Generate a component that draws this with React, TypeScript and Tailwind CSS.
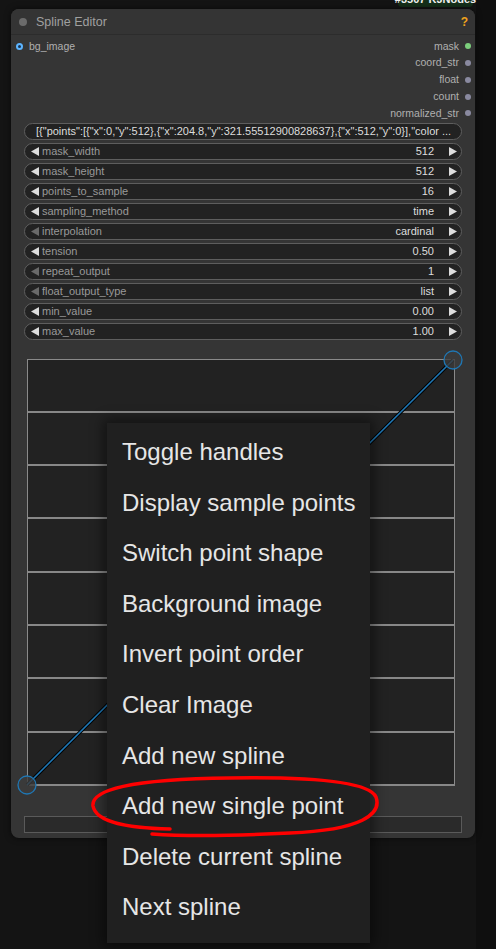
import React from "react";

type Widget = {
  label: string;
  value: string;
  dimLeft?: boolean;
};

const widgets: Widget[] = [
  { label: "mask_width", value: "512" },
  { label: "mask_height", value: "512" },
  { label: "points_to_sample", value: "16" },
  { label: "sampling_method", value: "time" },
  { label: "interpolation", value: "cardinal", dimLeft: true },
  { label: "tension", value: "0.50" },
  { label: "repeat_output", value: "1", dimLeft: true },
  { label: "float_output_type", value: "list", dimLeft: true },
  { label: "min_value", value: "0.00" },
  { label: "max_value", value: "1.00" },
];

const outputs = [
  { name: "mask", color: "bg-[#7ccf7c]" },
  { name: "coord_str", color: "bg-[#8a8aa0]" },
  { name: "float", color: "bg-[#8a8aa0]" },
  { name: "count", color: "bg-[#8a8aa0]" },
  { name: "normalized_str", color: "bg-[#8a8aa0]" },
];

const menuItems = [
  "Toggle handles",
  "Display sample points",
  "Switch point shape",
  "Background image",
  "Invert point order",
  "Clear Image",
  "Add new spline",
  "Add new single point",
  "Delete current spline",
  "Next spline",
];

const font = { fontFamily: '"Liberation Sans", Arial, sans-serif' };

function LeftArrow({ dim }: { dim?: boolean }) {
  return (
    <svg width="8" height="9" viewBox="0 0 8 9" className="shrink-0">
      <polygon points="8,0 8,9 0,4.5" fill={dim ? "#6a6a6a" : "#dddddd"} />
    </svg>
  );
}

function RightArrow() {
  return (
    <svg width="8" height="9" viewBox="0 0 8 9" className="shrink-0">
      <polygon points="0,0 0,9 8,4.5" fill="#dddddd" />
    </svg>
  );
}

function SplineCanvas() {
  const w = 428;
  const h = 426;
  const rows = [53, 106, 159, 213, 266, 319, 373];
  return (
    <div className="relative ml-[16px] mt-[19px] w-[428px] h-[427px]">
      <svg width={w} height={h + 1} className="absolute left-0 top-0 overflow-visible">
        <rect x="0.5" y="0.5" width={w - 1} height={h} fill="#222222" stroke="#8a8a8a" strokeWidth="1" />
        {rows.map((y) => (
          <line key={y} x1="0" x2={w} y1={y} y2={y} stroke="#888888" strokeWidth="2.2" />
        ))}
        <line x1="0" x2={w} y1={h} y2={h} stroke="#888888" strokeWidth="2.2" />
        <line x1="0" y1={h} x2={w - 2} y2="1" stroke="#000000" strokeWidth="3.5" />
        <line x1="0" y1={h} x2={w - 2} y2="1" stroke="#1f77b4" strokeWidth="1.6" />
        <circle cx="0" cy={h} r="9" fill="rgba(60,60,60,0.8)" stroke="#1f77b4" strokeWidth="1.3" />
        <circle cx={w - 2} cy="1" r="9" fill="rgba(60,60,60,0.8)" stroke="#1f77b4" strokeWidth="1.3" />
      </svg>
    </div>
  );
}

function Node() {
  return (
    <div
      className="absolute left-[11px] top-[9px] w-[464px] h-[829px] rounded-[8px] bg-[#353535] shadow-[0_0_6px_rgba(0,0,0,0.6)]"
      style={font}
    >
      {/* title bar */}
      <div className="h-[26px] flex items-center pt-[1px] px-[8px] border-b border-[#2c2c2c] rounded-t-[8px] bg-[#343434]">
        <div className="w-[8px] h-[8px] rounded-full bg-[#6b6b6b]" />
        <span className="ml-[9px] text-[12.5px] text-[#a0a0a0]">Spline Editor</span>
        <span className="ml-auto mr-[-1px] text-[12px] font-bold text-[#f0a31c]">?</span>
      </div>

      {/* slots */}
      <div className="pt-[3px] relative">
        <div className="absolute left-[5px] top-[3px] h-[16.75px] flex items-center">
          <div className="w-[7px] h-[7px] rounded-full bg-[#5cb4ff] flex items-center justify-center">
            <div className="w-[3px] h-[3px] rounded-full bg-[#1b3450]" />
          </div>
          <span className="ml-[6px] text-[10.5px] text-[#b0b0b0]">bg_image</span>
        </div>
        <div className="flex flex-col items-end pr-[4px]">
          {outputs.map((o) => (
            <div key={o.name} className="h-[16.75px] flex items-center">
              <span className="text-[10.5px] text-[#b0b0b0]">{o.name}</span>
              <div className={`ml-[6px] w-[6px] h-[6px] rounded-full ${o.color}`} />
            </div>
          ))}
        </div>
      </div>

      {/* widgets */}
      <div className="mx-[13px] mt-[1px] flex flex-col gap-[3px]">
        <div className="h-[17px] rounded-full border border-[#5e5e5e] bg-[#222222] flex items-center px-[11px] overflow-hidden">
          <span className="text-[11px] text-[#dddddd] whitespace-nowrap">
            {'[{"points":[{"x":0,"y":512},{"x":204.8,"y":321.55512900828637},{"x":512,"y":0}],"color ...'}
          </span>
        </div>
        {widgets.map((w) => (
          <div
            key={w.label}
            className="h-[17px] rounded-full border border-[#5e5e5e] bg-[#222222] flex items-center pl-[6px] pr-[4px]"
          >
            <LeftArrow dim={w.dimLeft} />
            <span className="ml-[3px] text-[11px] text-[#999999]">{w.label}</span>
            <span className="ml-auto mr-[15px] text-[11px] text-[#dddddd]">{w.value}</span>
            <RightArrow />
          </div>
        ))}
      </div>

      <SplineCanvas />

      <div className="mx-[13px] mt-[30px] h-[17px] border border-[#5a5a5a] bg-[#2a2a2a]" />
    </div>
  );
}

function ContextMenu() {
  return (
    <div
      className="absolute left-[107px] top-[423px] w-[263px] h-[520px] bg-[#202020] pt-[4px] shadow-[0_0_12px_4px_rgba(0,0,0,0.45)]"
      style={font}
    >
      {menuItems.map((item) => (
        <div key={item} className="h-[50.56px] flex items-center pl-[15px] text-[24px] text-[#e6e6e6]">
          {item}
        </div>
      ))}
    </div>
  );
}

export default function App() {
  return (
    <div className="relative w-[496px] h-[949px] overflow-hidden bg-[#141414] flex">
      <div className="flex-1" />
      <div className="w-[20px] bg-[#0f0f0f]" />

      {/* group badge above node */}
      <div
        className="absolute left-[398px] top-[-9px] w-[75px] h-[16px] rounded-[4px] bg-[#15301a] flex items-center justify-center"
        style={font}
      >
        <span className="text-[11px] font-bold text-[#f0f0f0] whitespace-nowrap">#3507 KJNodes</span>
      </div>

      <Node />
      <ContextMenu />

      {/* hand drawn red mark */}
      <svg width="496" height="949" className="absolute left-0 top-0 pointer-events-none">
        <path
          d="M 170 829 C 130 828, 96 823, 93 806 C 91 790, 130 779, 230 778 C 300 777, 368 780, 376 797 C 382 814, 362 830, 290 833 C 230 836, 180 836, 152 834"
          fill="none"
          stroke="#ff0000"
          strokeWidth="3.5"
          strokeLinecap="round"
        />
      </svg>
    </div>
  );
}
